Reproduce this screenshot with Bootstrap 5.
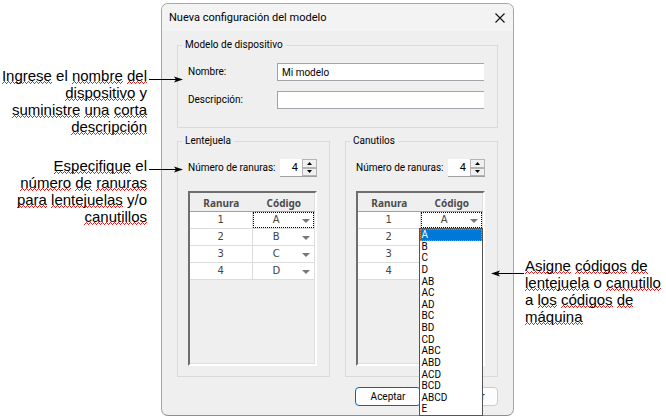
<!DOCTYPE html>
<html lang="es">
<head>
<meta charset="utf-8">
<meta name="viewport" content="width=device-width, initial-scale=1">
<title>Nueva configuración del modelo</title>
<link href="https://cdn.jsdelivr.net/npm/bootstrap@5.3.0/dist/css/bootstrap.min.css" rel="stylesheet">
<style>
body{background:#fff;color:#000;font-family:Roboto,sans-serif;font-size:10px;line-height:14px}
.figure-grid{display:grid;grid-template-columns:161px minmax(0,1fr) 152px;padding-top:3px}
.note{font:15px/17px "Liberation Sans",sans-serif;color:#000;white-space:nowrap}
.notes-start{padding:64px 14px 0 0}
.notes-start .note + .note{margin-top:22px}
.notes-end{padding:254px 0 0 11px}
.note u{text-decoration:none;background:url("data:image/svg+xml,%3Csvg xmlns='http://www.w3.org/2000/svg' width='4' height='3' shape-rendering='crispEdges'%3E%3Cpath d='M0 2h1v1h-1zM1 1h1v1h-1zM2 0h1v1h-1zM3 1h1v1h-1z' fill='%23ee2020'/%3E%3C/svg%3E") repeat-x left bottom}
.pointer{position:absolute;top:8px;left:100%;margin-left:1px}
.pointer-back{left:auto;right:100%;margin:4px 1px 0 0}
.dialog-win{background:#efefef;border:1px solid #a6a6a6;border-bottom-color:#8e8e8e;border-radius:7px}
.title-bar{height:27px;background:#f3f3f3;border-radius:6px 6px 0 0;padding:0 7px}
.title-bar h1{font-size:11px;line-height:14px;margin:0;font-weight:400}
.close-btn{background:none;border:0;padding:0;width:12px;height:12px}
.dialog-main{padding:7px 15px 9px}
.group-box{border:1px solid #dadada;padding:11px 12px 10px 10px}
.group-box legend{float:none;width:auto;margin:0 0 0 -6px;padding:0 3px;font-size:10px;line-height:14px}
.group-device{padding:11px 13px 18px 10px;margin-bottom:6px}
.field-rows{gap:10px}
.field-name{flex:0 0 89px}
.field-text{height:18px;min-height:0;border:1px solid #a3a3aa;border-width:1px 0 1px 1px;border-radius:0;padding:0 4px;font-size:10px;line-height:14px;color:#000;background:#fff}
.groups{gap:15px}
.spin-box{width:37px;height:18px;background:#fff;border-bottom:1px solid #a0a0a0}
.spin-box input{width:22px;border:0;padding:0 4px 0 0;text-align:right;background:transparent;font-size:11px}
.spin-keys{width:15px}
.spin-keys button{flex:1;display:flex;align-items:center;justify-content:center;border:1px solid #b4b4b4;background:#f0f0f0;padding:0}
.grid-frame{margin-top:14px;height:175px;border:2px solid;border-color:#6e6e6e #fff #fff #6e6e6e;box-shadow:inset -1px -1px #dedede}
.slot-table{width:100%;table-layout:fixed;border-collapse:separate;border-spacing:0;font:10px/14px "DejaVu Sans",sans-serif;color:#444;text-align:center}
.slot-table th{height:19px;padding:2px 0 0;font:700 10px/14px "Noto Sans",sans-serif;border-bottom:1px solid #a0a0a0;color:#4c4c4c}
.slot-table td{height:17px;padding:0;background:#fff;border:1px solid #dcdcdc;border-width:0 1px 1px 0}
.code-pick{position:relative}
.code-pick select{display:block;appearance:none;width:100%;height:16px;border:0;border-radius:0;padding:0 16px 0 2px;font:10px/14px "DejaVu Sans",sans-serif;color:#444;text-align-last:center;background:url("data:image/svg+xml,%3Csvg xmlns='http://www.w3.org/2000/svg' width='8' height='4'%3E%3Cpath d='M0 0H8L4 4Z' fill='%23777'/%3E%3C/svg%3E") no-repeat right 4px top 7px}
.code-pick select.current{border:1px dotted #000;padding:0 15px 0 1px;background-position:right 3px top 6px}
.code-menu{position:absolute;z-index:5;top:16px;left:-2px;width:64px;height:188px;margin:0;padding:0;list-style:none;display:flex;flex-direction:column;background:#fff;border:1px solid #555;font:10px/12px Roboto,sans-serif;color:#000;text-align:left}
.code-menu li{flex:1 1 0;min-height:0;padding-left:2px}
.code-menu li.active{background:#0078d7;color:#fff;outline:1px dotted #e08030;outline-offset:-1px}
.actions{gap:11px;margin-top:10px}
.actions button{width:66px;height:19px;border:1px solid #ccc;border-radius:4px;background:#fdfdfd;padding:0;font-size:10px;line-height:14px;color:#000}
.actions button.primary-act{border-color:#0067c0}
</style>
</head>
<body>
<div class="figure-grid">
  <aside class="notes-start text-end">
    <p class="note position-relative mb-0"><u>Ingrese</u> el <u>nombre</u> <u>del</u><br><u>dispositivo</u> y<br><u>suministre</u> <u>una</u> <u>corta</u><br><u>descripción</u>
      <svg class="pointer" width="35" height="9" aria-hidden="true"><path d="M1 4.5H32" stroke="#000"/><path d="M26 1.5L35 4.5L26 7.5L28 4.5Z"/></svg></p>
    <p class="note position-relative mb-0"><u>Especifique</u> el<br><u>número</u> <u>de</u> <u>ranuras</u><br><u>para</u> <u>lentejuelas</u> y/o<br><u>canutillos</u>
      <svg class="pointer" width="35" height="9" aria-hidden="true"><path d="M1 4.5H32" stroke="#000"/><path d="M26 1.5L35 4.5L26 7.5L28 4.5Z"/></svg></p>
  </aside>

  <main class="dialog-win">
    <header class="title-bar d-flex align-items-center justify-content-between">
      <h1>Nueva configuración del modelo</h1>
      <button type="button" class="close-btn d-flex align-items-center justify-content-center" aria-label="Cerrar"><svg width="10" height="10"><path d="M.5 .5L9.5 9.5M9.5 .5L.5 9.5" stroke="#111" stroke-width="1.1"/></svg></button>
    </header>
    <form class="dialog-main">
      <fieldset class="group-box group-device">
        <legend>Modelo de dispositivo</legend>
        <div class="field-rows d-flex flex-column">
          <div class="d-flex align-items-center">
            <label class="field-name" for="nombre">Nombre:</label>
            <input class="form-control field-text" id="nombre" type="text" value="Mi modelo">
          </div>
          <div class="d-flex align-items-center">
            <label class="field-name" for="descripcion">Descripción:</label>
            <input class="form-control field-text" id="descripcion" type="text">
          </div>
        </div>
      </fieldset>

      <div class="groups d-flex">
        <fieldset class="group-box flex-fill">
          <legend>Lentejuela</legend>
          <div class="d-flex align-items-center justify-content-between">
            <label class="text-nowrap" for="ranurasL">Número de ranuras:</label>
            <div class="spin-box d-flex"><input id="ranurasL" type="text" value="4">
              <div class="spin-keys d-flex flex-column"><button type="button" aria-label="Aumentar"><svg width="5" height="3"><path d="M0 3H5L2.500 0Z"/></svg></button><button type="button" aria-label="Disminuir"><svg width="5" height="3"><path d="M0 0H5L2.500 3Z"/></svg></button></div></div>
          </div>
          <div class="grid-frame">
            <table class="slot-table">
              <thead><tr><th scope="col">Ranura</th><th scope="col">Código</th></tr></thead>
              <tbody>
                <tr><td>1</td><td><div class="code-pick"><select class="current" aria-label="Código 1"><option>A</option></select></div></td></tr>
                <tr><td>2</td><td><div class="code-pick"><select aria-label="Código 2"><option>B</option></select></div></td></tr>
                <tr><td>3</td><td><div class="code-pick"><select aria-label="Código 3"><option>C</option></select></div></td></tr>
                <tr><td>4</td><td><div class="code-pick"><select aria-label="Código 4"><option>D</option></select></div></td></tr>
              </tbody>
            </table>
          </div>
        </fieldset>
        <fieldset class="group-box flex-fill">
          <legend>Canutilos</legend>
          <div class="d-flex align-items-center justify-content-between">
            <label class="text-nowrap" for="ranurasC">Número de ranuras:</label>
            <div class="spin-box d-flex"><input id="ranurasC" type="text" value="4">
              <div class="spin-keys d-flex flex-column"><button type="button" aria-label="Aumentar"><svg width="5" height="3"><path d="M0 3H5L2.500 0Z"/></svg></button><button type="button" aria-label="Disminuir"><svg width="5" height="3"><path d="M0 0H5L2.500 3Z"/></svg></button></div></div>
          </div>
          <div class="grid-frame">
            <table class="slot-table">
              <thead><tr><th scope="col">Ranura</th><th scope="col">Código</th></tr></thead>
              <tbody>
                <tr><td>1</td><td><div class="code-pick"><select class="current" aria-label="Código 1"><option>A</option></select>
                  <ul class="code-menu" role="listbox" aria-label="Códigos"><li class="active" role="option">A</li><li role="option">B</li><li role="option">C</li><li role="option">D</li><li role="option">AB</li><li role="option">AC</li><li role="option">AD</li><li role="option">BC</li><li role="option">BD</li><li role="option">CD</li><li role="option">ABC</li><li role="option">ABD</li><li role="option">ACD</li><li role="option">BCD</li><li role="option">ABCD</li><li role="option">E</li></ul></div></td></tr>
                <tr><td>2</td><td></td></tr>
                <tr><td>3</td><td></td></tr>
                <tr><td>4</td><td></td></tr>
              </tbody>
            </table>
          </div>
        </fieldset>
      </div>

      <div class="actions d-flex justify-content-end">
        <button type="button" class="primary-act">Aceptar</button>
        <button type="button">Cancelar</button>
      </div>
    </form>
  </main>

  <aside class="notes-end">
    <p class="note position-relative m-0"><u>Asigne</u> <u>códigos</u> <u>de</u><br><u>lentejuela</u> o <u>canutillo</u><br>a <u>los</u> <u>códigos</u> <u>de</u><br><u>máquina</u>
      <svg class="pointer pointer-back" width="33" height="9" aria-hidden="true"><path d="M3 4.5H33" stroke="#000"/><path d="M9 1.5L0 4.5L9 7.5L7 4.500Z"/></svg></p>
  </aside>
</div>
<script src="https://cdn.jsdelivr.net/npm/bootstrap@5.3.0/dist/js/bootstrap.bundle.min.js"></script>
</body>
</html>
